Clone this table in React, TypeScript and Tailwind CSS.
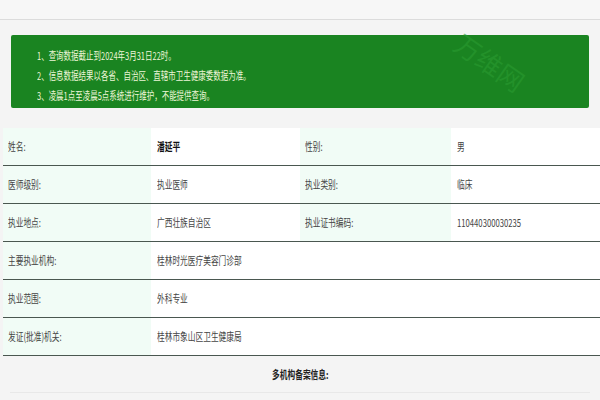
const font = { fontFamily: '"Noto Sans CJK SC", "Liberation Sans", sans-serif' };

const notices = [
  "1、查询数据截止到2024年3月31日22时。",
  "2、信息数据结果以各省、自治区、直辖市卫生健康委数据为准。",
  "3、凌晨1点至凌晨5点系统进行维护，不能提供查询。",
];

const Txt = ({ children, bold }: { children: React.ReactNode; bold?: boolean }) => (
  <span
    className={`inline-block origin-left scale-x-[0.7] whitespace-nowrap text-[11px] ${
      bold ? "font-bold text-[#111]" : "text-[#444]"
    }`}
  >
    {children}
  </span>
);

const pairRows = [
  ["姓名:", "潘延平", "性别:", "男"],
  ["医师级别:", "执业医师", "执业类别:", "临床"],
  ["执业地点:", "广西壮族自治区", "执业证书编码:", "110440300030235"],
];

const wideRows = [
  ["主要执业机构:", "桂林时光医疗美容门诊部"],
  ["执业范围:", "外科专业"],
  ["发证(批准)机关:", "桂林市象山区卫生健康局"],
];

export default function App() {
  return (
    <div className="relative h-[400px] w-[600px] overflow-hidden bg-[#f4f4f4]" style={font}>
      <div className="h-[20px] border-b border-[#dcdcdc] bg-[#f7f7f7]" />

      <div className="px-[11px] pt-[15px]">
        <div className="relative h-[73px] rounded-[2px] bg-[#1a8421] pl-[26px] pt-[8px]">
          {notices.map((n) => (
            <div key={n} className="h-[20px] leading-[20px]">
              <span className="inline-block origin-left scale-x-[0.68] whitespace-nowrap text-[11px] text-[#eef6d8]">
                {n}
              </span>
            </div>
          ))}
          {/* watermark */}
          <span className="pointer-events-none absolute left-[440px] top-[14px] rotate-[35deg] text-[26px] leading-none text-[#2a9a30] opacity-60">
            万维网
          </span>
        </div>
      </div>

      <div className="ml-[3px] mt-[20px]">
        {pairRows.map((r, i) => (
          <div key={i} className="flex h-[38px] border-b border-[#4a5750]">
            <div className="flex w-[148px] items-center bg-[#f1fcf6] pl-[5px]">
              <Txt>{r[0]}</Txt>
            </div>
            <div className="flex w-[149px] items-center bg-white pl-[6px]">
              <Txt bold={i === 0}>{r[1]}</Txt>
            </div>
            <div className="flex w-[151px] items-center bg-[#f1fcf6] pl-[5px]">
              <Txt>{r[2]}</Txt>
            </div>
            <div className="flex flex-1 items-center bg-white pl-[6px]">
              <Txt>{r[3]}</Txt>
            </div>
          </div>
        ))}
        {wideRows.map((r) => (
          <div key={r[0]} className="flex h-[38px] border-b border-[#4a5750]">
            <div className="flex w-[148px] items-center bg-[#f1fcf6] pl-[5px]">
              <Txt>{r[0]}</Txt>
            </div>
            <div className="flex flex-1 items-center bg-white pl-[6px]">
              <Txt>{r[1]}</Txt>
            </div>
          </div>
        ))}
      </div>

      <div className="flex h-[36px] items-center justify-center">
        <span className="inline-block scale-x-[0.7] whitespace-nowrap text-[11px] font-bold text-[#222]">
          多机构备案信息:
        </span>
      </div>
      <div className="mx-[10px] border-b border-[#e8e8e8]" />
    </div>
  );
}
